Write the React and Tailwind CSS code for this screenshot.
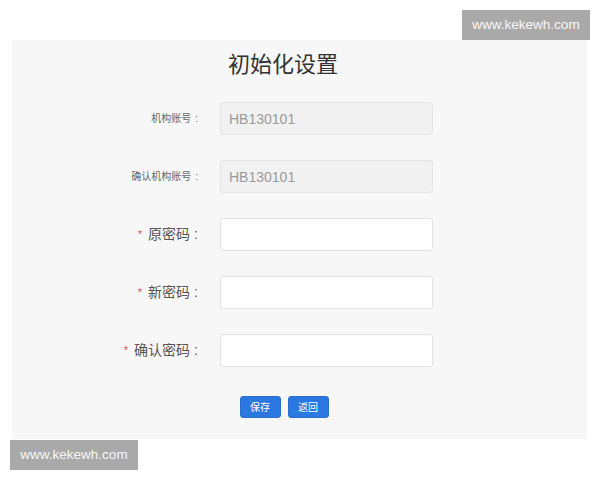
import React from 'react'

const FIELDS = [
    { label: '机构账号', value: 'HB130101', disabled: true },
    { label: '确认机构账号', value: 'HB130101', disabled: true },
    { label: '原密码', required: true },
    { label: '新密码', required: true },
    { label: '确认密码', required: true },
];

function Watermark() {
    return (
        <div className="w-[128px] h-[30px] bg-[#a9a9a9] flex items-center justify-center text-[13.5px] text-[#f7f7f7]">
            www.kekewh.com
        </div>
    )
}

export default function App() {
    return (
        <div className="w-[600px] h-[480px] bg-white overflow-hidden" style={{ fontFamily: '"Liberation Sans", "Noto Sans CJK SC", sans-serif' }}>
            <div className="flex justify-end pt-[10px] pr-[10px]">
                <Watermark />
            </div>

            {/* Settings panel */}
            <div className="ml-[12px] w-[575px] h-[399px] bg-[#f7f7f7] pt-[9px]">
                <h1 className="w-[542px] text-center text-[22px] leading-[32px] text-[#333] font-normal">初始化设置</h1>

                <div className="mt-[21px] flex flex-col gap-[25px]">
                    {FIELDS.map((field) => (
                        <div key={field.label} className="flex items-center">
                            <label className={`w-[186px] text-right whitespace-nowrap ${field.required ? 'text-[14px] text-[#555]' : 'text-[10px] text-[#666]'}`}>
                                {field.required && <span className="text-[#d9534f] text-[11px] mr-[6px] relative top-[-1px]">*</span>}
                                {field.label}
                                <span className="ml-[4px]">:</span>
                            </label>
                            <input
                                type={field.disabled ? 'text' : 'password'}
                                defaultValue={field.value}
                                disabled={field.disabled}
                                className={`ml-[22px] w-[213px] h-[33px] rounded-[3px] border px-[8px] text-[14px] outline-none ${field.disabled
                                    ? 'bg-[#f1f1f1] border-[#e4e4e4] text-[#9a9a9a]'
                                    : 'bg-white border-[#e2e2e2] text-[#333]'
                                    }`}
                            />
                        </div>
                    ))}
                </div>

                <div className="w-[544px] mt-[29px] flex justify-center gap-[7px]">
                    <button className="w-[41px] h-[22px] rounded-[3px] bg-[#2c78e2] border border-[#2a6fd0] text-white text-[10px]">保存</button>
                    <button className="w-[41px] h-[22px] rounded-[3px] bg-[#2c78e2] border border-[#2a6fd0] text-white text-[10px]">返回</button>
                </div>
            </div>

            <div className="pl-[10px] pt-[1px]">
                <Watermark />
            </div>
        </div>
    )
}
